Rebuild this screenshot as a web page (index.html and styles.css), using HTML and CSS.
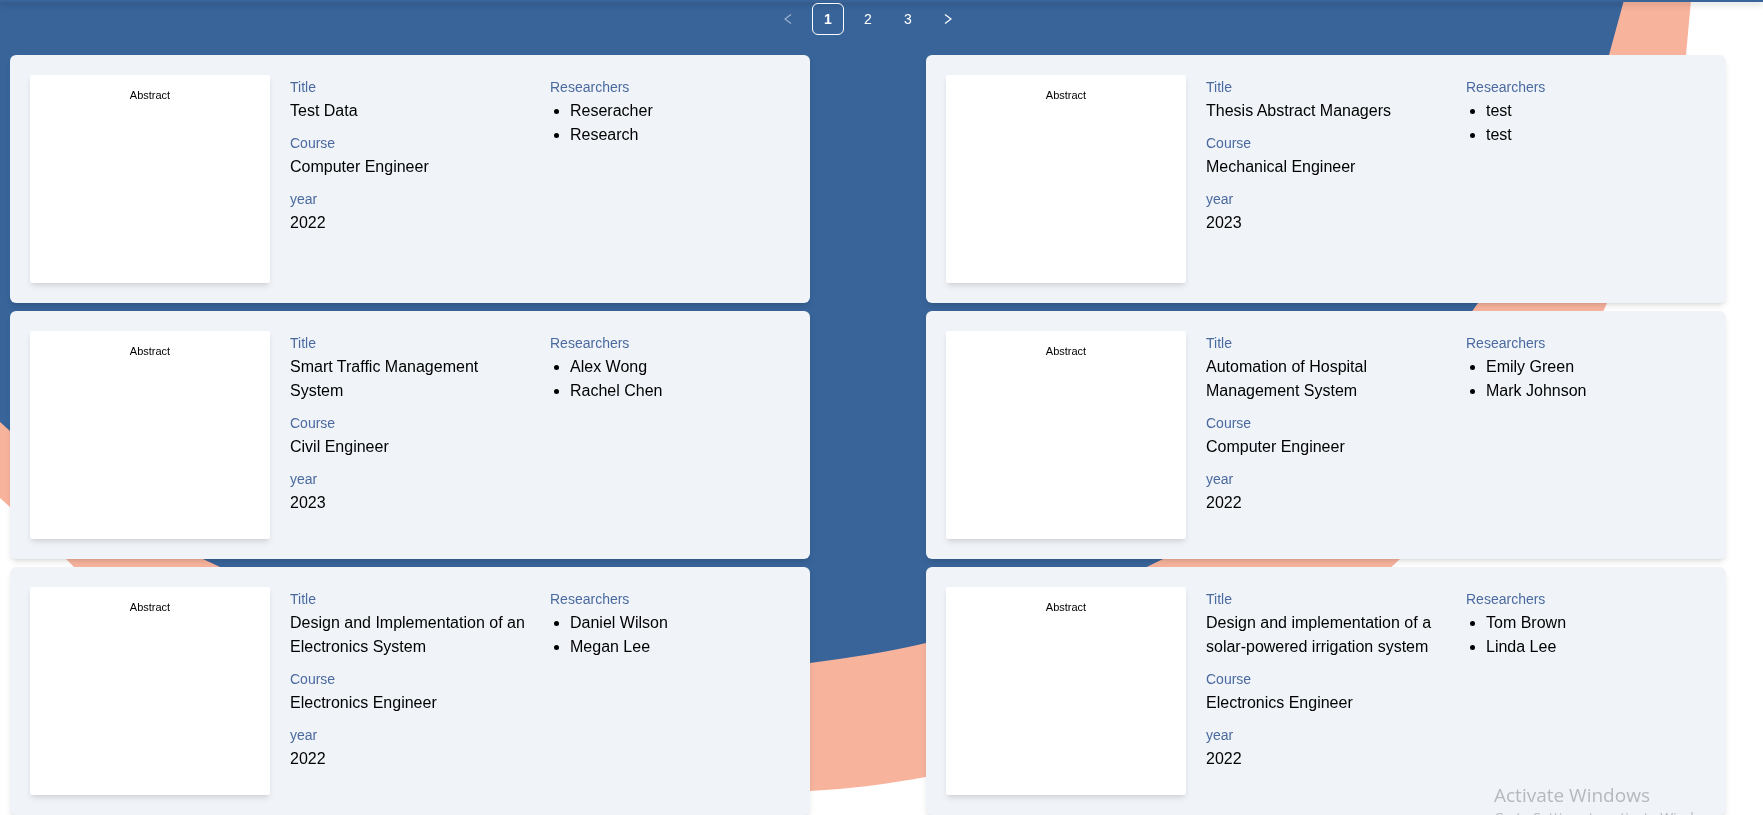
FILE: index.html
```html
<!DOCTYPE html>
<html lang="en">
<head>
<meta charset="utf-8">
<title>Thesis Abstracts</title>
<link rel="stylesheet" href="styles.css">
</head>
<body>
<svg class="backdrop" viewBox="0 0 1763 815" preserveAspectRatio="none" aria-hidden="true">
  <path fill="#f8b39d" d="M0 0H1691L1686 55C1678 142 1639 222 1607 303C1564 404 1479 483 1400 559C1275 679 1097 742 926 777C888 784 849 789 810 791C555 809 258 744 74 567L66 559L10 507L0 498Z"/>
  <path fill="#386499" d="M0 0H1624L1609 55C1583 144 1531 227 1478 303C1401 414 1283 498 1163 559C1088 597 1010 622 926 643C888 652 849 658 810 663C613 685 400 651 220 567L203 559C134 525 68 482 10 431L0 422Z"/>
</svg>
<header class="topbar"></header>
<main class="page">
  <nav class="pagination" aria-label="Pagination">
    <button class="page-btn" type="button" disabled aria-label="Previous page"><svg class="arrow" viewBox="0 0 12 12"><path d="M9 1.5L3 6L9 10.5"/></svg></button>
    <button class="page-btn is-active" type="button" aria-current="page">1</button>
    <button class="page-btn" type="button">2</button>
    <button class="page-btn" type="button">3</button>
    <button class="page-btn" type="button" aria-label="Next page"><svg class="arrow" viewBox="0 0 12 12"><path d="M3 1.5L9 6L3 10.5"/></svg></button>
  </nav>
  <section class="cards">
    <article class="card">
      <div class="sheet">Abstract</div>
      <dl class="details">
        <div><dt>Title</dt><dd>Test Data</dd></div>
        <div><dt>Course</dt><dd>Computer Engineer</dd></div>
        <div><dt>year</dt><dd>2022</dd></div>
      </dl>
      <div class="people"><h3>Researchers</h3><ul><li>Reseracher</li><li>Research</li></ul></div>
    </article>
    <article class="card">
      <div class="sheet">Abstract</div>
      <dl class="details">
        <div><dt>Title</dt><dd>Thesis Abstract Managers</dd></div>
        <div><dt>Course</dt><dd>Mechanical Engineer</dd></div>
        <div><dt>year</dt><dd>2023</dd></div>
      </dl>
      <div class="people"><h3>Researchers</h3><ul><li>test</li><li>test</li></ul></div>
    </article>
    <article class="card">
      <div class="sheet">Abstract</div>
      <dl class="details">
        <div><dt>Title</dt><dd>Smart Traffic Management System</dd></div>
        <div><dt>Course</dt><dd>Civil Engineer</dd></div>
        <div><dt>year</dt><dd>2023</dd></div>
      </dl>
      <div class="people"><h3>Researchers</h3><ul><li>Alex Wong</li><li>Rachel Chen</li></ul></div>
    </article>
    <article class="card">
      <div class="sheet">Abstract</div>
      <dl class="details">
        <div><dt>Title</dt><dd>Automation of Hospital Management System</dd></div>
        <div><dt>Course</dt><dd>Computer Engineer</dd></div>
        <div><dt>year</dt><dd>2022</dd></div>
      </dl>
      <div class="people"><h3>Researchers</h3><ul><li>Emily Green</li><li>Mark Johnson</li></ul></div>
    </article>
    <article class="card">
      <div class="sheet">Abstract</div>
      <dl class="details">
        <div><dt>Title</dt><dd>Design and Implementation of an Electronics System</dd></div>
        <div><dt>Course</dt><dd>Electronics Engineer</dd></div>
        <div><dt>year</dt><dd>2022</dd></div>
      </dl>
      <div class="people"><h3>Researchers</h3><ul><li>Daniel Wilson</li><li>Megan Lee</li></ul></div>
    </article>
    <article class="card">
      <div class="sheet">Abstract</div>
      <dl class="details">
        <div><dt>Title</dt><dd>Design and implementation of a solar-powered irrigation system</dd></div>
        <div><dt>Course</dt><dd>Electronics Engineer</dd></div>
        <div><dt>year</dt><dd>2022</dd></div>
      </dl>
      <div class="people"><h3>Researchers</h3><ul><li>Tom Brown</li><li>Linda Lee</li></ul></div>
    </article>
  </section>
</main>
<aside class="watermark">
  <p class="watermark-title">Activate Windows</p>
  <p class="watermark-text">Go to Settings to activate Windows.</p>
</aside>
</body>
</html>
```
FILE: styles.css
```css
* {
  box-sizing: border-box;
  margin: 0;
  padding: 0;
}

body {
  background: #fff;
  color: #000;
  font: 16px/24px "Liberation Sans", Arial, sans-serif;
  overflow: hidden;
}

.backdrop {
  position: fixed;
  inset: 0;
  z-index: -1;
  width: 100%;
  height: 100%;
}

.topbar {
  height: 2px;
  background: #386499;
  box-shadow: 0 2px 6px rgba(0, 0, 0, 0.3);
}

.page {
  padding: 1px 37px 0 10px;
}

.pagination {
  display: flex;
  justify-content: center;
  gap: 8px;
  margin-bottom: 20px;
}

.page-btn {
  display: flex;
  align-items: center;
  justify-content: center;
  width: 32px;
  height: 32px;
  border: 1px solid transparent;
  border-radius: 6px;
  background: transparent;
  color: #fff;
  font: 14px/30px "Liberation Sans", Arial, sans-serif;
}

.page-btn.is-active {
  border-color: #fff;
  font-weight: 600;
}

.page-btn:disabled {
  opacity: 0.5;
}

.arrow {
  width: 12px;
  height: 12px;
  fill: none;
  stroke: currentColor;
  stroke-width: 1.2;
}

.cards {
  display: grid;
  grid-template-columns: repeat(2, 1fr);
  column-gap: 116px;
  row-gap: 8px;
}

.card {
  display: grid;
  grid-template-columns: repeat(3, 1fr);
  gap: 20px;
  padding: 20px;
  border-radius: 6px;
  background: #f0f4f9;
  box-shadow: 0 4px 6px -1px rgba(0, 0, 0, 0.1), 0 2px 4px -2px rgba(0, 0, 0, 0.1);
}

.sheet {
  min-height: 208px;
  padding-top: 8px;
  border-radius: 2px;
  background: #fff;
  box-shadow: 0 4px 6px -1px rgba(0, 0, 0, 0.1), 0 2px 4px -2px rgba(0, 0, 0, 0.1);
  font-size: 11px;
  text-align: center;
}

.details {
  display: flex;
  flex-direction: column;
  gap: 8px;
}

.details dt,
.people h3 {
  color: #4a6a9f;
  font-size: 14px;
  font-weight: 400;
}

.people ul {
  padding-left: 20px;
}

.watermark {
  position: fixed;
  top: 782px;
  left: 1494px;
  color: #b5b9be;
  font-family: "Open Sans", "Noto Sans", sans-serif;
  white-space: nowrap;
}

.watermark-title {
  font-size: 19px;
  line-height: 26px;
}

.watermark-text {
  font-size: 14px;
  line-height: 20px;
}
```
